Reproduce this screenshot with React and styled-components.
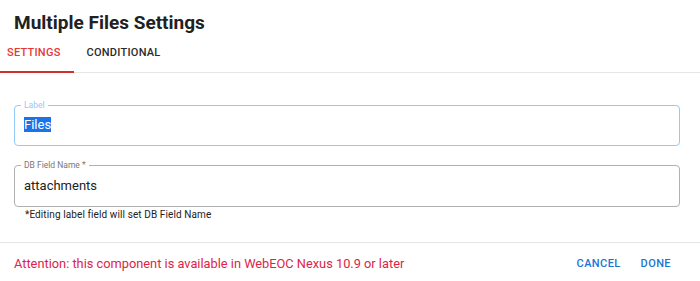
import React from "react";
import styled, { createGlobalStyle } from "styled-components";

const Global = createGlobalStyle`
  html, body { margin: 0; padding: 0; background: #fff; }
  body { font-family: Roboto, "Liberation Sans", sans-serif; color: #212121; }
  * { box-sizing: border-box; }
`;

const Dialog = styled.div`
  width: 700px;
  height: 281px;
  display: flex;
  flex-direction: column;
  background: #fff;
`;

const Title = styled.h2`
  margin: 0;
  padding: 12px 14px 0;
  height: 36px;
  font-size: 19px;
  line-height: 22px;
  font-weight: 700;
  color: #212121;
`;

const Tabs = styled.div`
  display: flex;
  height: 37px;
  border-bottom: 1px solid #e6e6e6;
`;

const Tab = styled.div`
  position: relative;
  padding: 10px 13px 0 ${(p) => (p.$first ? 7 : 13)}px;
  font-size: 11px;
  line-height: 13px;
  font-weight: 500;
  letter-spacing: 0.25px;
  color: ${(p) => (p.$active ? "#e53935" : "#2b2b2b")};
  ${(p) =>
    p.$active &&
    `&::after { content: ""; position: absolute; left: 0; right: 0; bottom: -1px; height: 2px; background: #d32f2f; }`}
`;

const Body = styled.div`
  flex: 1;
  display: flex;
  flex-direction: column;
  padding: 32px 20px 0 14px;
  border-bottom: 1px solid #e6e6e6;
`;

const Field = styled.div`
  position: relative;
  height: ${(p) => p.$h}px;
  margin-top: ${(p) => p.$mt || 0}px;
  padding: 0 9px 2px;
  border: 1.5px solid ${(p) => (p.$focus ? "#90caf9" : "#b0b0b0")};
  border-radius: 4px;
  display: flex;
  align-items: center;
`;

const FloatLabel = styled.span`
  position: absolute;
  top: -6px;
  left: 6px;
  padding: 0 3px;
  background: #fff;
  font-size: 8.5px;
  line-height: 10px;
  color: ${(p) => (p.$focus ? "#90caf9" : "#777")};
`;

const Value = styled.span`
  font-size: 13px;
  line-height: 15px;
  color: #212121;
`;

const Selected = styled.span`
  background: #1a73e8;
  color: #fff;
`;

const Helper = styled.div`
  font-size: 10px;
  line-height: 12px;
  color: #212121;
  padding: 2px 0 0 11px;
  letter-spacing: 0.1px;
`;

const Footer = styled.div`
  height: 38px;
  display: flex;
  align-items: center;
  padding: 2px 29px 0 14px;
`;

const Attention = styled.div`
  flex: 1;
  font-size: 12.8px;
  color: #dd2448;
`;

const Button = styled.button`
  border: 0;
  background: none;
  padding: 0;
  margin-left: ${(p) => p.$ml || 0}px;
  font-family: inherit;
  font-size: 11px;
  font-weight: 500;
  letter-spacing: 0.4px;
  color: #1976d2;
`;

export default function App() {
  return (
    <>
      <Global />
      <Dialog>
        <Title>Multiple Files Settings</Title>
        <Tabs>
          <Tab $active $first>SETTINGS</Tab>
          <Tab>CONDITIONAL</Tab>
        </Tabs>
        <Body>
          <Field $focus $h={41}>
            <FloatLabel $focus>Label</FloatLabel>
            <Value>
              <Selected>Files</Selected>
            </Value>
          </Field>
          <Field $h={42} $mt={19}>
            <FloatLabel>DB Field Name *</FloatLabel>
            <Value>attachments</Value>
          </Field>
          <Helper>*Editing label field will set DB Field Name</Helper>
        </Body>
        <Footer>
          <Attention>Attention: this component is available in WebEOC Nexus 10.9 or later</Attention>
          <Button>CANCEL</Button>
          <Button $ml={20}>DONE</Button>
        </Footer>
      </Dialog>
    </>
  );
}
